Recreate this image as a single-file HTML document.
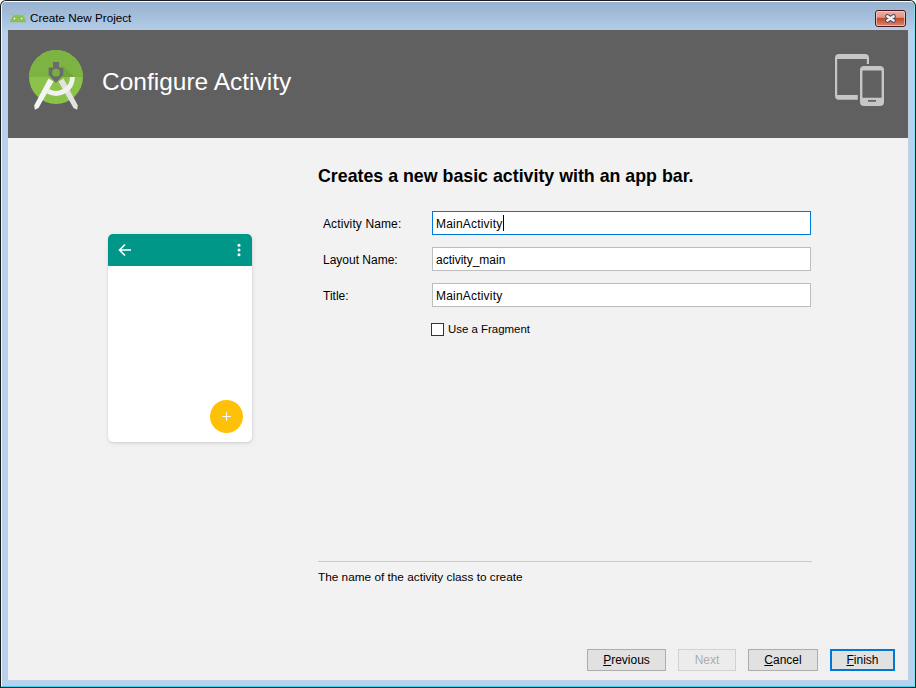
<!DOCTYPE html>
<html><head><meta charset="utf-8">
<style>
*{margin:0;padding:0;box-sizing:border-box}
html,body{width:916px;height:688px;overflow:hidden;background:#fff}
body{position:relative;font-family:"Liberation Sans",sans-serif;font-size:12px;color:#000}
.abs{position:absolute}
#win{left:0;top:0;width:916px;height:688px;background:#1c1c1c;border-radius:6px 6px 0 0}
#inner{left:1px;top:1px;width:914px;height:686px;border-radius:5px 5px 0 0;
  background:linear-gradient(to bottom,#97b2d0 0px,#a4bedb 14px,#b6cee8 29px,#b9d1ea 30px,#b9d1ea 100%);
  border-left:1px solid #f4f8fc;border-top:1px solid #fdfeff;border-right:1px solid #7fe4f7;border-bottom:1px solid #3fd2ef}
#header{left:8px;top:30px;width:900px;height:108px;background:#606060}
#content{left:8px;top:138px;width:900px;height:542px;background:#f2f2f2}
#btnbar{left:8px;top:639px;width:900px;height:41px;background:#f0f0f0}
.t{position:absolute;white-space:pre;line-height:1}
.field{position:absolute;left:432px;width:379px;height:24px;background:#fff;border:1px solid #bdbdbd}
.field.focus{border-color:#0078d7}
.btn{position:absolute;top:649px;height:22px;background:#e1e1e1;border:1px solid #adadad;text-align:center;line-height:20px}
.btn u{text-decoration:underline}
</style></head><body>
<div id="win" class="abs"></div>
<div id="inner" class="abs"></div>
<!-- titlebar icon -->
<svg class="abs" style="left:9px;top:12px" width="19" height="11" viewBox="0 0 19 11">
  <path d="M0.9 10.2 A8.15 7.6 0 0 1 17.2 10.2 Z" fill="#8cc152"/>
  <line x1="1.6" y1="1.2" x2="4.6" y2="4" stroke="#8cc152" stroke-width="0.9"/>
  <line x1="16.5" y1="1.2" x2="13.5" y2="4" stroke="#8cc152" stroke-width="0.9"/>
  <circle cx="5.5" cy="6.6" r="0.8" fill="#fff"/>
  <circle cx="12.6" cy="6.6" r="0.8" fill="#fff"/>
</svg>
<div class="t" style="left:30px;top:12px;font-size:11.7px">Create New Project</div>
<!-- close button -->
<svg class="abs" style="left:875px;top:10px" width="31" height="17" viewBox="0 0 31 17">
  <defs><linearGradient id="cg" x1="0" y1="0" x2="0" y2="1">
    <stop offset="0" stop-color="#eab0a2"/><stop offset="0.42" stop-color="#e09985"/>
    <stop offset="0.5" stop-color="#c24a2c"/><stop offset="1" stop-color="#dc8a70"/></linearGradient></defs>
  <rect x="0.5" y="0.5" width="30" height="16" rx="2.5" fill="url(#cg)" stroke="#4a1822"/>
  <rect x="1.5" y="1.5" width="28" height="14" rx="1.5" fill="none" stroke="#f6d0c6" stroke-opacity="0.7"/>
  <path d="M12.4 6.3 L18.6 10.5 M18.6 6.3 L12.4 10.5" stroke="#3b3f5c" stroke-width="4.4" stroke-linecap="round"/>
  <path d="M12.4 6.3 L18.6 10.5 M18.6 6.3 L12.4 10.5" stroke="#f2f2f2" stroke-width="2.6" stroke-linecap="round"/>
</svg>

<div id="header" class="abs"></div>
<div id="content" class="abs"></div>
<div id="btnbar" class="abs"></div>

<!-- Android Studio logo -->
<svg class="abs" style="left:26px;top:46px" width="60" height="68" viewBox="26 46 60 68">
  <defs>
    <clipPath id="topc"><rect x="26" y="46" width="60" height="31"/></clipPath>
    <clipPath id="circ"><circle cx="56" cy="77" r="27"/></clipPath>
  </defs>
  <circle cx="56" cy="77" r="27" fill="#8bc34a"/>
  <circle cx="56" cy="77" r="27" fill="#7cb342" clip-path="url(#topc)"/>
  <g clip-path="url(#circ)"><path d="M59 62 L90 93 L90 77 L63.4 77 L63.4 67.4 Z" fill="#000" fill-opacity="0.08" clip-path="url(#topc)"/></g>
  <path d="M48.5 78.5 L53.5 81.5 L38.5 108 L34.8 109.8 L34.2 105.5 Z" fill="#f4f4f4"/>
  <path d="M63.5 78.5 L58.5 81.5 L73.5 108 L77.2 109.8 L77.8 105.5 Z" fill="#e2e2e2"/>
  <path d="M72.45 77 A16.45 16.45 0 0 1 47.8 91.2" fill="none" stroke="#f1f1f1" stroke-width="4.9"/>
  <path d="M53 62 H59 V67.4 H63.4 V75 L56 83 L48.7 75 V67.4 H53 Z" fill="#6b6b6b"/>
  <circle cx="56" cy="72.7" r="3.9" fill="#76ad45"/>
</svg>
<div class="t" style="left:102px;top:70px;font-size:24.5px;color:#fff">Configure Activity</div>

<!-- device icon -->
<svg class="abs" style="left:834px;top:53px" width="52" height="55" viewBox="0 0 52 55">
  <path d="M5 1 H31 A4 4 0 0 1 35 5 V11 H32.8 V6 H3.2 V42 H23.8 V46.8 H5 A4 4 0 0 1 1 42.8 V5 A4 4 0 0 1 5 1 Z" fill="#c6c6c6"/>
  <path d="M30 13 H46 A4 4 0 0 1 50 17 V49 A4 4 0 0 1 46 53 H30 A4 4 0 0 1 26 49 V17 A4 4 0 0 1 30 13 Z M28.4 17.4 V44.7 H47.6 V17.4 Z M34 47 V48.8 H42 V47 Z" fill="#c6c6c6" fill-rule="evenodd"/>
</svg>

<!-- phone preview -->
<div class="abs" style="left:108px;top:234px;width:144px;height:208px;background:#fff;border-radius:5px;box-shadow:0 1px 3px rgba(0,0,0,0.10),1px 2px 6px rgba(0,0,0,0.05),0 0 1px rgba(0,0,0,0.08);overflow:hidden">
  <div class="abs" style="left:0;top:0;width:144px;height:32px;background:#009688"></div>
</div>
<svg class="abs" style="left:116px;top:242px" width="18" height="16" viewBox="0 0 18 16">
  <path d="M15 8 H4 M9 2.5 L3.5 8 L9 13.5" fill="none" stroke="#fff" stroke-width="1.6"/>
</svg>
<svg class="abs" style="left:234px;top:242px" width="10" height="16" viewBox="0 0 10 16">
  <circle cx="5" cy="3.3" r="1.5" fill="#fff"/><circle cx="5" cy="8.1" r="1.5" fill="#fff"/><circle cx="5" cy="12.8" r="1.5" fill="#fff"/>
</svg>
<svg class="abs" style="left:209px;top:399px" width="35" height="35" viewBox="0 0 35 35">
  <circle cx="17.5" cy="17.5" r="16.5" fill="#ffc107"/>
  <path d="M13.2 17.5 H21.8 M17.5 13.2 V21.8" stroke="#fff" stroke-width="1.1"/>
</svg>

<!-- form -->
<div class="t" style="left:318px;top:168px;font-size:17.8px;font-weight:bold">Creates a new basic activity with an app bar.</div>

<div class="t" style="left:323px;top:218px;letter-spacing:0.12px">Activity Name:</div>
<div class="t" style="left:323px;top:254px">Layout Name:</div>
<div class="t" style="left:323px;top:290px">Title:</div>

<div class="field focus" style="top:211px"></div>
<div class="field" style="top:247px"></div>
<div class="field" style="top:283px"></div>
<div class="t" style="left:436px;top:218px;letter-spacing:0.2px">MainActivity</div>
<div class="abs" style="left:503px;top:215px;width:1px;height:16px;background:#000"></div>
<div class="t" style="left:436px;top:254px">activity_main</div>
<div class="t" style="left:436px;top:290px;letter-spacing:0.2px">MainActivity</div>

<div class="abs" style="left:431px;top:323px;width:13px;height:13px;background:#fff;border:1px solid #333"></div>
<div class="t" style="left:448px;top:324px;font-size:11.45px">Use a Fragment</div>

<div class="abs" style="left:318px;top:561px;width:494px;height:1px;background:#c8c8c8"></div>
<div class="t" style="left:318px;top:572px;font-size:11.8px">The name of the activity class to create</div>

<!-- buttons -->
<div class="btn" style="left:587px;width:79px"><u>P</u>revious</div>
<div class="btn" style="left:678px;width:58px;color:#adadad;background:#ececec;border-color:#d2d2d2">Next</div>
<div class="btn" style="left:748px;width:70px"><u>C</u>ancel</div>
<div class="btn" style="left:830px;width:65px;border:2px solid #0078d7;line-height:18px"><u>F</u>inish</div>
</body></html>
